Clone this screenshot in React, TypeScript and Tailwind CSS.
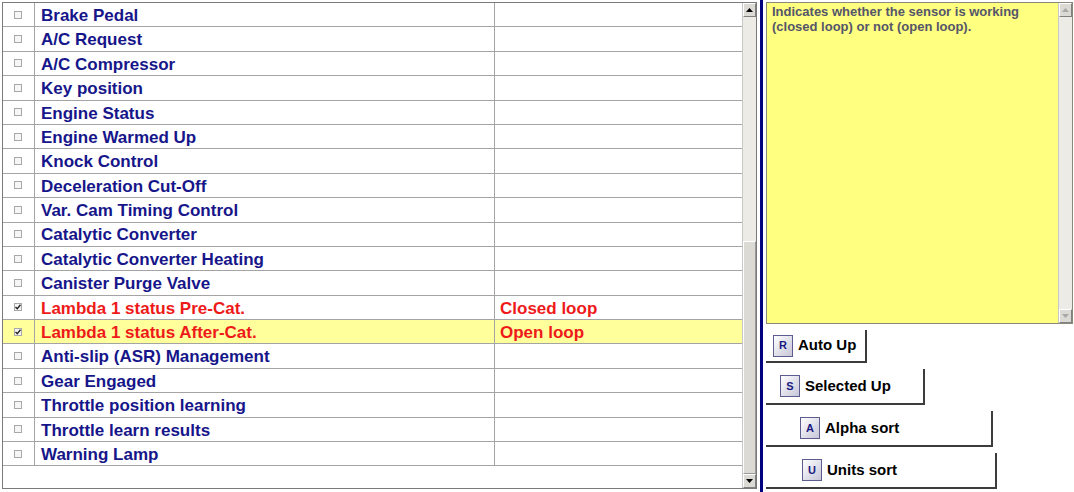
import React from "react";

type Row = {
  name: string;
  value?: string;
  checked?: boolean;
  selected?: boolean;
};

const rows: Row[] = [
  { name: "Brake Pedal" },
  { name: "A/C Request" },
  { name: "A/C Compressor" },
  { name: "Key position" },
  { name: "Engine Status" },
  { name: "Engine Warmed Up" },
  { name: "Knock Control" },
  { name: "Deceleration Cut-Off" },
  { name: "Var. Cam Timing Control" },
  { name: "Catalytic Converter" },
  { name: "Catalytic Converter Heating" },
  { name: "Canister Purge Valve" },
  { name: "Lambda 1 status Pre-Cat.", value: "Closed loop", checked: true },
  { name: "Lambda 1 status After-Cat.", value: "Open loop", checked: true, selected: true },
  { name: "Anti-slip (ASR) Management" },
  { name: "Gear Engaged" },
  { name: "Throttle position learning" },
  { name: "Throttle learn results" },
  { name: "Warning Lamp" },
];

const CheckBox = ({ checked }: { checked?: boolean }) => (
  <span className="w-[8px] h-[8px] border border-[#a8a8a8] bg-[#f6f6f6] flex items-center justify-center">
    {checked && (
      <svg width="6" height="6" viewBox="0 0 6 6">
        <path d="M0.5 3 L2.3 4.8 L5.5 0.8" stroke="#222" strokeWidth="1.4" fill="none" />
      </svg>
    )}
  </span>
);

const Arrow = ({ up, disabled }: { up?: boolean; disabled?: boolean }) => (
  <div className="h-[14px] w-full bg-[#dcdad4] border-t border-l border-t-white border-l-white border-r border-b border-r-[#808080] border-b-[#808080] flex items-center justify-center">
    <svg width="7" height="4" viewBox="0 0 7 4">
      <path
        d={up ? "M0 4 L3.5 0 L7 4 Z" : "M0 0 L3.5 4 L7 0 Z"}
        fill={disabled ? "#a8a8a8" : "#000"}
      />
    </svg>
  </div>
);

const KeyIcon = ({ letter }: { letter: string }) => (
  <span className="w-[20px] h-[22px] shrink-0 border border-[#5c5c8e] bg-linear-to-br from-white to-[#c6c6d8] text-[11px] font-bold text-[#1a1a80] flex items-center justify-center">
    {letter}
  </span>
);

const SortButton = ({
  letter,
  label,
  width,
  height,
  pad,
}: {
  letter: string;
  label: string;
  width: string;
  height: string;
  pad: string;
}) => (
  <div className={`${width} ${height} ${pad} flex items-center gap-[5px] border-r-2 border-b-2 border-[#3c3c3c]`}>
    <KeyIcon letter={letter} />
    <span className="text-[15px] font-bold text-black">{label}</span>
  </div>
);

const App = () => {
  return (
    <div
      className="w-[1074px] h-[492px] bg-white flex overflow-hidden"
      style={{ fontFamily: '"Liberation Sans", Arial, sans-serif' }}
    >
      {/* parameter list */}
      <div className="ml-[2px] mt-[2px] w-[755px] h-[487px] border border-[#7a7a7a] flex">
        <div className="flex-1 flex flex-col">
          {rows.map((row) => (
            <div
              key={row.name}
              className={`h-[24.4px] shrink-0 flex border-b border-[#a4a4a4] ${row.selected ? "bg-[#ffff9c]" : "bg-white"}`}
            >
              <div className="w-[32px] pl-[11px] flex items-center border-r border-[#a4a4a4]">
                <CheckBox checked={row.checked} />
              </div>
              <div
                className={`w-[460px] pl-[6px] pt-[2px] flex items-center border-r border-[#a4a4a4] text-[17px] font-bold whitespace-nowrap ${row.checked ? "text-[#ee1a1a]" : "text-[#16168a]"}`}
              >
                {row.name}
              </div>
              <div className="flex-1 pl-[5px] pt-[2px] flex items-center text-[17px] font-bold text-[#ee1a1a]">
                {row.value}
              </div>
            </div>
          ))}
        </div>
        <div className="w-[14px] flex flex-col bg-[#ecebe6] border-l border-[#c8c8c8]">
          <Arrow up />
          <div className="h-[224px]" />
          <div className="flex-1 bg-[#dcdad4] border-t border-l border-t-white border-l-white border-r border-b border-r-[#9a9a9a] border-b-[#9a9a9a]" />
          <Arrow />
        </div>
      </div>

      {/* separator */}
      <div className="ml-[3px] w-[3px] h-full bg-[#00007e]" />

      {/* right side */}
      <div className="ml-[3px] flex flex-col">
        <div className="mt-[2px] w-[307px] h-[322px] flex border border-[#8a8a7a]">
          <div className="flex-1 bg-[#ffff80] px-[5px] pt-[1px] text-[13px] leading-[15px] font-bold text-[#55556a]">
            Indicates whether the sensor is working (closed loop) or not (open loop).
          </div>
          <div className="w-[14px] flex flex-col justify-between bg-[#ecebe6] border-l border-[#c8c8c8]">
            <Arrow up disabled />
            <Arrow disabled />
          </div>
        </div>
        <div className="mt-[6px] flex flex-col gap-[6px]">
          <SortButton letter="R" label="Auto Up" width="w-[101px]" height="h-[33px]" pad="pl-[7px]" />
          <SortButton letter="S" label="Selected Up" width="w-[159px]" height="h-[36px]" pad="pl-[14px]" />
          <SortButton letter="A" label="Alpha sort" width="w-[227px]" height="h-[36px]" pad="pl-[34px]" />
          <SortButton letter="U" label="Units sort" width="w-[231px]" height="h-[36px]" pad="pl-[36px]" />
        </div>
      </div>
    </div>
  );
};

export default App;
